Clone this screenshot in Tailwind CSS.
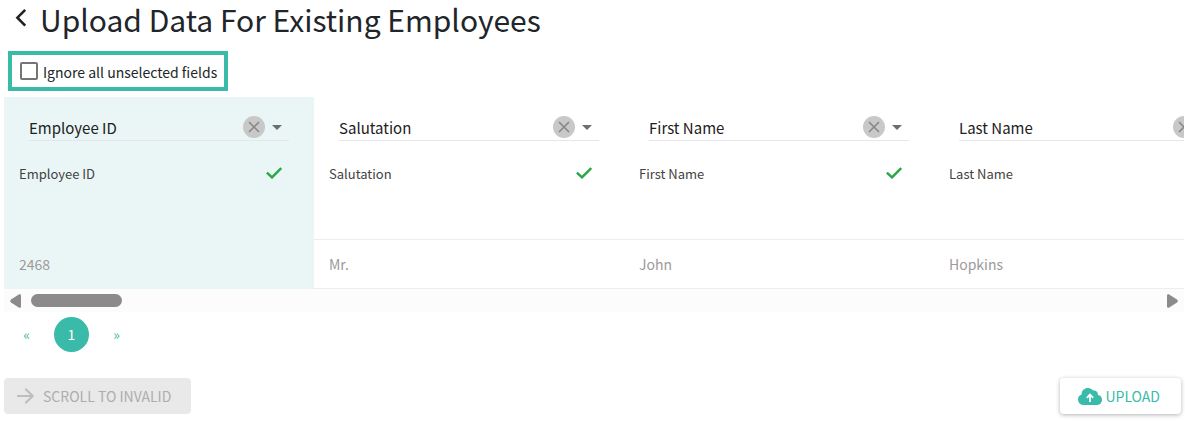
<!DOCTYPE html>
<html lang="en">
<head>
  <meta charset="UTF-8">
  <meta name="viewport" content="width=device-width, initial-scale=1.0">
  <title>Upload Data For Existing Employees</title>
  <script src="https://cdn.jsdelivr.net/npm/@tailwindcss/browser@4"></script>
</head>
<body class="bg-white font-['Noto_Sans_CJK_SC',sans-serif] text-[#212529] pl-1 pr-px">

  <header class="flex items-start gap-2 pl-2 h-[51px]">
    <button type="button" aria-label="Back" class="pt-2">
      <svg class="w-5 h-5" viewBox="0 0 20 20" fill="none" stroke="#212121" stroke-width="2.6"><path d="M13.200 1.800 5.400 9.700l7.800 7.900"/></svg>
    </button>
    <h1 class="text-[30px] leading-[38px] whitespace-nowrap">Upload Data For Existing Employees</h1>
  </header>

  <label class="ml-1 w-fit h-10 flex items-center gap-[5px] border-4 border-[#3abaa8] pl-2 pr-[7px] text-sm whitespace-nowrap">
    <input type="checkbox" class="appearance-none w-[18px] h-[18px] border-2 border-[#757575] rounded-xs bg-white checked:bg-[#3abaa8]">
    <span class="pt-0.5">Ignore all unselected fields</span>
  </label>

  <main class="mt-1.5">
    <div class="overflow-hidden">
      <table class="table-fixed w-[1240px] border-separate border-spacing-0 text-left">
        <thead>
          <tr id="headRow"></tr>
        </thead>
        <tbody>
          <tr id="dataRow"></tr>
        </tbody>
      </table>
    </div>

    <!-- horizontal scroll track -->
    <div class="flex items-center h-[23px] bg-[#fcfcfc] pl-1.5 pr-1.5">
      <svg class="w-[11px] h-[14px]" viewBox="0 0 11 14" fill="#8b8b8b"><path d="M9.2.2Q11-.2 11 1.600v10.800Q11 14.200 9.200 13.800L1 8.600Q-.6 7 1 5.400Z"/></svg>
      <div class="ml-2.5 w-[91px] h-[13px] rounded-full bg-[#8b8b8b]"></div>
      <svg class="ml-auto w-[11px] h-[14px]" viewBox="0 0 11 14" fill="#8b8b8b"><path d="M1.800.2Q0-.2 0 1.600v10.800Q0 14.200 1.800 13.800L10 8.600Q11.600 7 10 5.400Z"/></svg>
    </div>

    <nav aria-label="Pages" class="flex items-center gap-2.5 mt-[5px] pl-[5px] text-sm text-[#3abaa8]">
      <a href="#" aria-label="Previous" class="w-[35px] h-[35px] pb-0.5 flex items-center justify-center">«</a>
      <a href="#" class="w-[35px] h-[35px] pb-0.5 flex items-center justify-center rounded-full bg-[#3abaa8] text-white">1</a>
      <a href="#" aria-label="Next" class="w-[35px] h-[35px] pb-0.5 flex items-center justify-center">»</a>
    </nav>
  </main>

  <footer class="flex justify-between mt-[26px] pb-[7px] pr-[3px] text-sm">
    <button type="button" disabled class="flex items-center gap-2 h-9 pl-3 pr-5 rounded bg-[#e9e9e9] text-[#adadad] whitespace-nowrap">
      <svg class="w-[19px] h-4" viewBox="0 0 19 16" fill="none" stroke="#bdbdbd" stroke-width="2.2" stroke-linecap="round" stroke-linejoin="round"><path d="M2 8h14.500M10 1.500 16.700 8 10 14.500"/></svg>
      SCROLL TO INVALID
    </button>
    <button type="button" class="flex items-center gap-[3px] h-9 pl-[18px] pr-[21px] rounded bg-white text-[#3abaa8] shadow-[0_1px_4px_rgba(0,0,0,0.3)] whitespace-nowrap">
      <svg class="w-6 h-[17px]" viewBox="0 0 24 17"><path fill="#3abaa8" d="M5.500 17A5.500 5.500 0 0 1 0 11.600 5.300 5.300 0 0 1 3.600 6.500 C3.400 2.500 6.500 0 10 0c2.200 0 3.900.9 5 2.600 2.800-.6 5.200 1.300 5 4.400A5 5 0 0 1 24 12 5 5 0 0 1 19.300 17Z"/><path d="M12 14V7M8.800 9.800 12 6.600l3.200 3.200" fill="none" stroke="#fff" stroke-width="1.800"/></svg>
      UPLOAD
    </button>
  </footer>

  <script>
    const columns = [
      { name: 'Employee ID', value: '2468' },
      { name: 'Salutation', value: 'Mr.' },
      { name: 'First Name', value: 'John' },
      { name: 'Last Name', value: 'Hopkins' },
    ];

    const headRow = document.getElementById('headRow');
    const dataRow = document.getElementById('dataRow');

    columns.forEach((column, i) => {
      // The key column is tinted
      const tint = i === 0 ? 'bg-[#e9f6f5] border-[#e9f6f5]' : 'bg-white border-[#eeeeee]';

      headRow.insertAdjacentHTML('beforeend', `
        <th class="h-[143px] p-0 align-top font-normal border-b ${tint}">
          <div class="flex items-center ml-[25px] mr-[25px] mt-[17px] h-[27px] border-b border-[#e6e6ea]">
            <select aria-label="Field for ${column.name}" class="appearance-none flex-1 min-w-0 h-6 text-[15px] leading-6 mt-0.5 text-[#212121]"><option>${column.name}</option></select>
            <button type="button" aria-label="Clear" class="w-[22px] h-[22px] rounded-full bg-[#c8c8c8] flex items-center justify-center">
              <svg class="w-3 h-3" viewBox="0 0 12 12" stroke="#858585" stroke-width="1.500"><path d="M1 1l10 10M11 1 1 11"/></svg>
            </button>
            <svg class="w-2.5 h-[5px] ml-[7px] mr-[7px]" viewBox="0 0 10 5" fill="#6b6f70"><path d="M0 0h10L5 5Z"/></svg>
          </div>
          <div class="flex items-center justify-between ml-[15px] mr-8 mt-5 h-6 text-[13px] text-[#424242]">
            <span class="pt-0.5">${column.name}</span>
            <svg class="w-4 h-3" viewBox="0 0 16 12" fill="none" stroke="#28a745" stroke-width="2.400"><path d="M.9 5.600 6 10.400 15.200 1"/></svg>
          </div>
        </th>`);

      dataRow.insertAdjacentHTML('beforeend', `
        <td class="h-[49px] py-0 px-[15px] text-sm text-[#9b9b9b] border-b ${tint}">${column.value}</td>`);
    });
  </script>
</body>
</html>
